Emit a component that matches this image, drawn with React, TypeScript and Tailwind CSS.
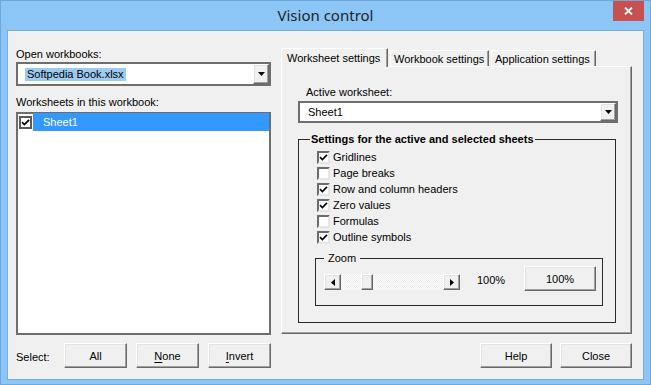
import type { ReactNode } from 'react';

const raised =
  'bg-[#f0f0f0] border border-t-white border-l-white border-r-[#696969] border-b-[#696969] shadow-[inset_-1px_-1px_0_#a0a0a0,inset_1px_1px_0_#e3e3e3]';

function CheckMark() {
  return (
    <svg width="9" height="9" viewBox="0 0 9 9" className="block">
      <path d="M1 4.2 L3.4 6.6 L8 1.8" stroke="#000" strokeWidth="1.7" fill="none" />
    </svg>
  );
}

function CheckBox({ checked, label }: { checked: boolean; label: string }) {
  return (
    <div className="flex h-4 items-center pl-[2px]">
      <span className="flex h-[13px] w-[13px] items-center justify-center border-2 border-t-[#6b6b6b] border-l-[#6b6b6b] border-r-[#e6e6e6] border-b-[#e6e6e6] bg-white">
        {checked && <CheckMark />}
      </span>
      <span className="ml-[3px]">{label}</span>
    </div>
  );
}

function DropButton() {
  return (
    <div className={`${raised} flex w-[16px] items-center justify-center`}>
      <svg width="7" height="4" viewBox="0 0 7 4">
        <path d="M0 0 H7 L3.5 4 Z" fill="#000" />
      </svg>
    </div>
  );
}

function Button({ children, className }: { children: ReactNode; className: string }) {
  return (
    <div className={`${raised} flex h-[25px] items-center justify-center ${className}`}>{children}</div>
  );
}

function Arrow({ dir }: { dir: 'left' | 'right' }) {
  return (
    <div className={`${raised} flex h-[16px] w-[17px] items-center justify-center`}>
      <svg width="4" height="7" viewBox="0 0 4 7">
        <path d={dir === 'left' ? 'M4 0 V7 L0 3.5 Z' : 'M0 0 V7 L4 3.5 Z'} fill="#000" />
      </svg>
    </div>
  );
}

export default function App() {
  return (
    <div
      className="flex h-[385px] w-[651px] flex-col border border-[#6fa7dd] bg-[#8cc6f7] text-[11px] leading-[14px] text-black"
      style={{ fontFamily: '"Liberation Sans", Arial, sans-serif' }}
    >
      {/* title bar */}
      <div className="grid h-[29px] grid-cols-[1fr_auto_1fr]">
        <div />
        <div className="self-center pb-[1px] text-[15px] text-[#1f1f1f]" style={{ fontFamily: '"Noto Sans", sans-serif' }}>
          Vision control
        </div>
        <div className="flex justify-end pr-[6px]">
          <div className="flex h-[20px] w-[31px] items-center justify-center bg-[#c75050]">
            <svg width="9" height="8" viewBox="0 0 9 8">
              <path d="M1 0.5 L8 7.5 M8 0.5 L1 7.5" stroke="#fff" strokeWidth="1.8" />
            </svg>
          </div>
        </div>
      </div>

      {/* client area */}
      <div className="mx-[6px] flex h-[350px] flex-col border border-[#78acdc] bg-[#f0f0f0] pt-[16px] pl-[8px]">
        <div className="flex">
          {/* left column */}
          <div className="flex w-[255px] flex-col">
            <div className="h-[14px]">Open workbooks:</div>
            <div className="mt-[1px] flex h-[24px] border-2 border-[#6e6e6e] bg-white">
              <div className="flex flex-1 items-center pl-[7px]">
                <span className="bg-[#9ccbf2] px-[2px] leading-[13px]">Softpedia Book.xlsx</span>
              </div>
              <DropButton />
            </div>
            <div className="mt-[9px] h-[14px]">Worksheets in this workbook:</div>
            <div className="mt-[3px] h-[223px] border-2 border-[#6e6e6e] bg-white">
              <div className="mt-[-1px] flex h-[18px] items-center">
                <div className="flex w-[15px] justify-end pr-[1px]">
                  <span className="flex h-[13px] w-[13px] items-center justify-center border-2 border-[#5a5a5a] bg-white">
                    <CheckMark />
                  </span>
                </div>
                <div className="flex h-full flex-1 items-center bg-[#3399ff] pl-[10px] text-white">Sheet1</div>
              </div>
            </div>
          </div>

          {/* right column */}
          <div className="mt-[1px] ml-[10px] flex w-[351px] flex-col">
            <div className="flex h-[18px] items-end gap-[2px]">
              <div className="relative z-10 -mb-[1px] flex h-[19px] w-[107px] items-start border-t border-l border-r border-t-white border-l-white border-r-[#696969] bg-[#f0f0f0] pt-[2px] pl-[5px] shadow-[inset_-1px_0_0_#a0a0a0]">
                Worksheet settings
              </div>
              <div className="flex h-[16px] w-[99px] items-center border-t border-l border-r border-t-white border-l-white border-r-[#696969] pl-[3px] shadow-[inset_-1px_0_0_#a0a0a0]">
                Workbook settings
              </div>
              <div className="flex h-[16px] w-[105px] items-center border-t border-l border-r border-t-white border-l-white border-r-[#696969] pl-[3px] shadow-[inset_-1px_0_0_#a0a0a0]">
                Application settings
              </div>
            </div>
            <div className="flex h-[268px] flex-col border border-t-white border-l-white border-r-[#696969] border-b-[#696969] pt-[18px] pl-[16px] shadow-[inset_-1px_-1px_0_#a0a0a0]">
              <div className="ml-[8px] h-[14px]">Active worksheet:</div>
              <div className="mt-[2px] flex h-[22px] w-[320px] border-2 border-[#6e6e6e] bg-white">
                <div className="flex flex-1 items-center pl-[8px]">Sheet1</div>
                <DropButton />
              </div>

              <fieldset className="mt-[9px] w-[318px] border border-[#2a2a2a] pb-[16px] pl-[16px]">
                <legend className="ml-[-5px] px-[1px] font-bold">Settings for the active and selected sheets</legend>
                <div className="pt-[3px]">
                  <CheckBox checked label="Gridlines" />
                  <CheckBox checked={false} label="Page breaks" />
                  <CheckBox checked label="Row and column headers" />
                  <CheckBox checked label="Zero values" />
                  <CheckBox checked={false} label="Formulas" />
                  <CheckBox checked label="Outline symbols" />
                </div>

                <fieldset className="mt-[6px] w-[288px] border border-[#2a2a2a] pb-[14px]">
                  <legend className="ml-[8px] px-[4px]">Zoom</legend>
                  <div className="flex items-start pt-[1px] pr-[6px] pl-[8px]">
                    <div className="mt-[8px] flex w-[136px]">
                      <Arrow dir="left" />
                      <div className="flex h-[16px] flex-1 bg-[#f7f7f7] bg-[repeating-conic-gradient(#ececec_0_25%,#ffffff_0_50%)] bg-[length:2px_2px] pl-[20px]">
                        <div className={`${raised} h-[16px] w-[12px]`} />
                      </div>
                      <Arrow dir="right" />
                    </div>
                    <div className="mt-[7px] ml-[17px]">100%</div>
                    <Button className="ml-auto w-[72px]">100%</Button>
                  </div>
                </fieldset>
              </fieldset>
            </div>
          </div>
        </div>

        {/* bottom row */}
        <div className="mt-[8px] flex h-[25px] items-center pr-[11px]">
          <div className="w-[48px] pt-[2px]">Select:</div>
          <Button className="w-[63px]">All</Button>
          <Button className="ml-[9px] w-[63px]">
            <span>
              <span className="underline underline-offset-2">N</span>one
            </span>
          </Button>
          <Button className="ml-[9px] w-[63px]">
            <span>
              <span className="underline underline-offset-2">I</span>nvert
            </span>
          </Button>
          <div className="ml-auto flex gap-[8px]">
            <Button className="w-[72px]">Help</Button>
            <Button className="w-[72px]">Close</Button>
          </div>
        </div>
      </div>
    </div>
  );
}
